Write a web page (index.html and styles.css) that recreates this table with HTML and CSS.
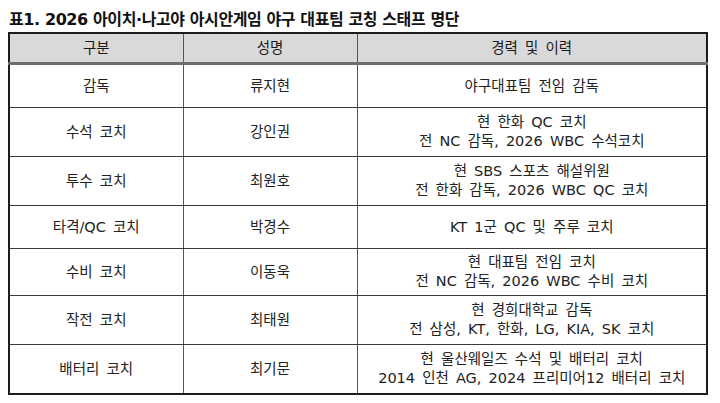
FILE: index.html
```html
<!DOCTYPE html>
<html lang="ko">
<head>
<meta charset="utf-8">
<link rel="stylesheet" href="styles.css">
</head>
<body>
<div class="page">
  <h1 class="title">표1. 2026 아이치·나고야 아시안게임 야구 대표팀 코칭 스태프 명단</h1>
  <table class="staff">
    <colgroup>
      <col class="c1"><col class="c2"><col class="c3">
    </colgroup>
    <thead>
      <tr class="head"><th>구분</th><th>성명</th><th>경력 및 이력</th></tr>
    </thead>
    <tbody>
      <tr class="r1"><td>감독</td><td>류지현</td><td>야구대표팀 전임 감독</td></tr>
      <tr class="r2"><td>수석 코치</td><td>강인권</td><td>현 한화 QC 코치<br>전 NC 감독, 2026 WBC 수석코치</td></tr>
      <tr class="r3"><td>투수 코치</td><td>최원호</td><td>현 SBS 스포츠 해설위원<br>전 한화 감독, 2026 WBC QC 코치</td></tr>
      <tr class="r4"><td>타격/QC 코치</td><td>박경수</td><td>KT 1군 QC 및 주루 코치</td></tr>
      <tr class="r5"><td>수비 코치</td><td>이동욱</td><td>현 대표팀 전임 코치<br>전 NC 감독, 2026 WBC 수비 코치</td></tr>
      <tr class="r6"><td>작전 코치</td><td>최태원</td><td>현 경희대학교 감독<br>전 삼성, KT, 한화, LG, KIA, SK 코치</td></tr>
      <tr class="r7"><td>배터리 코치</td><td>최기문</td><td>현 울산웨일즈 수석 및 배터리 코치<br>2014 인천 AG, 2024 프리미어12 배터리 코치</td></tr>
    </tbody>
  </table>
</div>
</body>
</html>
```

FILE: styles.css
```css
html, body {
  margin: 0;
  padding: 0;
  background: #ffffff;
}
body {
  font-family: "Noto Sans CJK KR", "Noto Sans", sans-serif;
  color: #222222;
}
.page {
  padding: 10px 0 0 8px;
  width: 701px;
}
.title {
  margin: 0 0 2px 1px;
  font-family: "DejaVu Sans", "Noto Sans CJK KR", sans-serif;
  font-size: 16px;
  font-weight: 700;
  line-height: 20px;
  color: #111111;
  letter-spacing: -0.4px;
  word-spacing: 0;
}
.staff {
  width: 700px;
  border-collapse: collapse;
  border: 2px solid #1c1c1c;
  table-layout: fixed;
  font-family: "DejaVu Sans", "Noto Sans CJK KR", sans-serif;
  font-size: 14.5px;
  word-spacing: 2.5px;
}
.c1, .c2 { width: 174px; }
.staff th, .staff td {
  text-align: center;
  vertical-align: middle;
  border-left: 1px solid #555555;
  border-right: 1px solid #555555;
  border-top: 1px solid #3a3a3a;
  border-bottom: 1px solid #3a3a3a;
  padding: 0;
  line-height: 19px;
}
.staff th {
  background: #d9d9d9;
  font-weight: 400;
  height: 28px;
  border-bottom: 3px solid #6e6e6e;
  color: #1a1a1a;
}
.r1 td { height: 42px; }
.r2 td { height: 48px; }
.r3 td { height: 48px; }
.r4 td { height: 42px; }
.r5 td { height: 46px; }
.r6 td { height: 48px; }
.r7 td { height: 48px; }
```
